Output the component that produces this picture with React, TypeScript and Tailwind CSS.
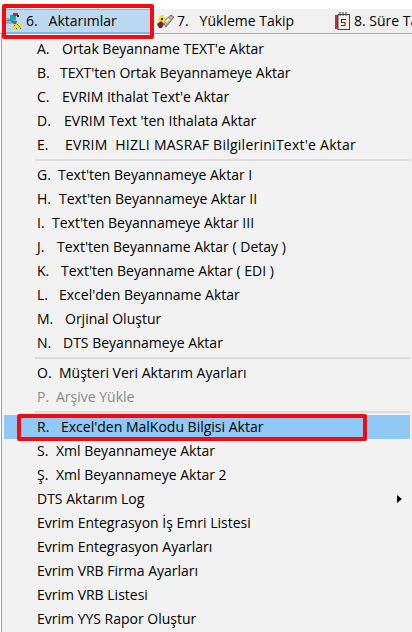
type Row = { k?: string; w?: string; t: string; disabled?: boolean; active?: boolean; wide?: boolean };

const groups: Row[][] = [
  [
    { k: "A.", w: "w-[25px]", t: "Ortak Beyanname TEXT'e Aktar" },
    { k: "B.", w: "w-[23px]", t: "TEXT'ten Ortak Beyannameye Aktar" },
    { k: "C.", w: "w-[25px]", t: "EVRIM Ithalat Text'e Aktar" },
    { k: "D.", w: "w-[27px]", t: "EVRIM Text 'ten Ithalata Aktar" },
    { k: "E.", w: "w-[28px]", t: "EVRIM  HIZLI MASRAF BilgileriniText'e Aktar", wide: true },
  ],
  [
    { k: "G.", w: "w-[21px]", t: "Text'ten Beyannameye Aktar I" },
    { k: "H.", w: "w-[22px]", t: "Text'ten Beyannameye Aktar II" },
    { k: "I.", w: "w-[15px]", t: "Text'ten Beyannameye Aktar III" },
    { k: "J.", w: "w-[20px]", t: "Text'ten Beyanname Aktar ( Detay )" },
    { k: "K.", w: "w-[24px]", t: "Text'ten Beyanname Aktar ( EDI )" },
    { k: "L.", w: "w-[22px]", t: "Excel'den Beyanname Aktar" },
    { k: "M.", w: "w-[28px]", t: "Orjinal Oluştur" },
    { k: "N.", w: "w-[26px]", t: "DTS Beyannameye Aktar" },
  ],
  [
    { k: "O.", w: "w-[22px]", t: "Müşteri Veri Aktarım Ayarları" },
    { k: "P.", w: "w-[19px]", t: "Arşive Yükle", disabled: true },
  ],
  [
    { k: "R.", w: "w-[24px]", t: "Excel'den MalKodu Bilgisi Aktar", active: true },
    { k: "S.", w: "w-[19px]", t: "Xml Beyannameye Aktar" },
    { k: "Ş.", w: "w-[19px]", t: "Xml Beyannameye Aktar 2" },
    { t: "DTS Aktarım Log" },
    { t: "Evrim Entegrasyon İş Emri Listesi" },
    { t: "Evrim Entegrasyon Ayarları" },
    { t: "Evrim VRB Firma Ayarları" },
    { t: "Evrim VRB Listesi" },
    { t: "Evrim YYS Rapor Oluştur" },
  ],
];

function PaletteIcon() {
  return (
    <svg width="16" height="16" viewBox="0 0 16 16" className="shrink-0">
      <path d="M0 5h6v6H0z" fill="#a3adad" />
      <path d="M1 7h4v1H1z" fill="#5f6b6b" />
      <path d="M4 2h6v5H4z" fill="#18a9a9" />
      <path d="M7 0h5v3H7z" fill="#d8202a" />
      <path d="M11 2h2v2h-2z" fill="#222" />
      <path d="M5 7l6 1-1 4-4-2z" fill="#1c78c8" />
      <path d="M7 11h8v5H7z" fill="#f2e21c" />
      <path d="M8 12h1v1H8zm3-1h1v1h-1zm2 2h1v1h-1zm-3 2h1v1h-1zm4 0h1v1h-1z" fill="#222" />
    </svg>
  );
}

function TrackIcon() {
  return (
    <svg width="18" height="16" viewBox="0 0 18 16" className="shrink-0">
      <path d="M7 9l8-7 3 2-8 10z" fill="#b8b08c" stroke="#555" strokeWidth="0.8" />
      <path d="M12 5l2 2-3 3-2-2z" fill="#e8e4d0" />
      <path d="M2 6l3-4h3l1 5-2 5H3z" fill="#f6e416" />
      <path d="M1 11l4-3 3 3-2 4H3z" fill="#7a1f3c" />
      <path d="M5 5h2v2H5z" fill="#222" />
    </svg>
  );
}

function CalendarIcon() {
  return (
    <svg width="15" height="18" viewBox="0 0 15 18" className="shrink-0">
      <rect x="0" y="3" width="3.5" height="14" fill="#b5323a" />
      <rect x="3" y="2.5" width="11.5" height="15" fill="#f4f0e6" stroke="#444" />
      <path d="M5 0v4M8 0v4M11 0v4" stroke="#555" strokeWidth="1.2" />
      <path d="M6 7h5v1H7v2h3.5v4H6v-1h3.5v-2H6z" fill="#333" />
    </svg>
  );
}

export default function App() {
  return (
    <div
      className="relative flex h-[632px] w-[412px] flex-col overflow-hidden bg-white text-[14px] leading-[24px] text-black"
      style={{ fontFamily: '"Open Sans", "Noto Sans", sans-serif' }}
    >
      <div className="mt-[9px] flex h-[25px] shrink-0 items-stretch border-b border-[#a9a9a9] bg-[#f0f0f0]">
        <div className="ml-[4px] flex w-[148px] shrink-0 items-center gap-[4px] border border-[#7fb4e6] bg-[#bcd9f1] pl-px">
          <PaletteIcon />
          <span className="whitespace-pre">6.   Aktarımlar</span>
        </div>
        <div className="ml-[4px] flex w-[179px] shrink-0 items-center gap-[3px]">
          <TrackIcon />
          <span className="whitespace-pre">7.   Yükleme Takip</span>
        </div>
        <div className="flex items-center gap-[4px]">
          <CalendarIcon />
          <span className="whitespace-pre">8. Süre Ta</span>
        </div>
      </div>

      <div className="ml-[1px] flex-1 border-l border-[#a0a0a0] bg-[#f2f2f2] px-[2px] pt-[3px]">
        {groups.map((rows, i) => (
          <div key={i}>
            {i > 0 && <div className="my-[2px] ml-[31px] h-[2px] bg-[#dcdcdc]" />}
            {rows.map((r) => (
              <div
                key={r.t}
                className={`relative flex h-[24px] whitespace-pre pl-[33px] ${r.active ? "bg-[#90c8f6]" : ""} ${r.disabled ? "text-[#8a8a8a]" : ""}`}
              >
                {r.k && <span className={r.w}>{r.k}</span>}
                <span className={r.wide ? "tracking-[0.25px]" : ""}>{r.t}</span>
                {r.t === "DTS Aktarım Log" && (
                  <span className="absolute right-[8px] top-[8px] h-0 w-0 border-y-[4px] border-l-[5px] border-y-transparent border-l-black" />
                )}
              </div>
            ))}
          </div>
        ))}
      </div>

      <div className="absolute left-[2px] top-[4px] h-[35px] w-[152px] rounded-[2px] border-[4px] border-[#f50a12]" />
      <div className="absolute left-[17px] top-[414px] h-[27px] w-[350px] rounded-[2px] border-[4px] border-[#f50a12]" />
    </div>
  );
}
